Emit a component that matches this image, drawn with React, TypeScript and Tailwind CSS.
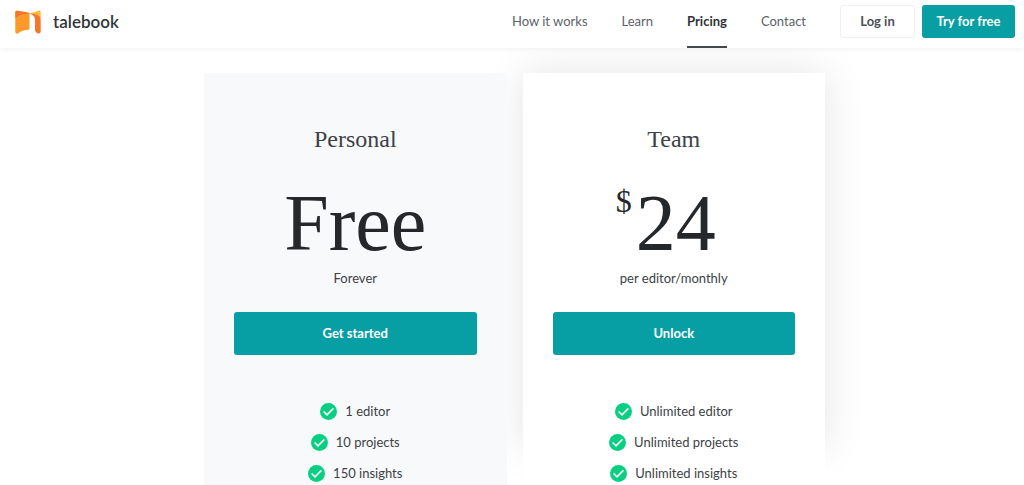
const links = [
  { label: "How it works", active: false },
  { label: "Learn", active: false },
  { label: "Pricing", active: true },
  { label: "Contact", active: false }
];

const plans = [
  {
    name: "Personal",
    currency: "",
    price: "Free",
    period: "Forever",
    action: "Get started",
    features: ["1 editor", "10 projects", "150 insights"],
    featured: false
  },
  {
    name: "Team",
    currency: "$",
    price: "24",
    period: "per editor/monthly",
    action: "Unlock",
    features: ["Unlimited editor", "Unlimited projects", "Unlimited insights"],
    featured: true
  }
];

function Logo() {
  return (
    <svg className="h-6 w-[26px]" viewBox="0 0 26 24" aria-hidden="true">
      <path d="M2.500.8C6 2 10 1.700 14.500 3.400V19.500C9 19.800 6 21.200 3.300 23.300C1.500 24.200.3 23.300.3 21.500V2.500C.3 1 1.200.3 2.500.8Z" fill="#fb9a2b" />
      <path d="M.3 8V2.500C.3 1 1.200.3 2.500.8C6.500 1.900 10 1.200 15 3.300C9 3.500 4 5 .3 8Z" fill="#f7742b" />
      <path d="M13.500 3.300C18 2.900 21 2 23.500.6C25 0 25.700.8 25.700 2V9C23 5 19 3.800 13.500 3.300Z" fill="#fdba3b" />
      <path d="M13.500 3.300C20 3.600 25.700 5 25.700 10V21.500C25.700 23.200 24 24 22.500 23.200C21 22.400 20 21.300 20 20V10C20 6.500 18 4.500 13.500 3.300Z" fill="#f7742b" />
    </svg>
  );
}

function CheckIcon() {
  return (
    <svg className="size-[17px] shrink-0" viewBox="0 0 16 16" aria-hidden="true">
      <circle cx="8" cy="8" r="8" fill="#0acf83" />
      <path d="M3.400 8 6.600 11.100 12.600 5.100" fill="none" stroke="#fff" strokeWidth="1.500" />
    </svg>
  );
}

export default function App() {
  return (
    <div className="bg-white font-['Lato',sans-serif] text-[13px] text-[#3d4246]">
      <header className="relative z-20 flex h-12 items-start justify-between bg-white pr-[9px] pl-[15px] shadow-[0_1px_6px_rgba(0,0,0,0.06)]">
        <a href="#" className="flex h-[43px] items-center gap-3 text-[17px] font-semibold text-[#303439]">
          <Logo />
          talebook
        </a>
        <div className="flex items-start">
          <nav className="mr-[34px] flex gap-[34px]">
            {links.map((link) => (
              <a
                key={link.label}
                href="#"
                className={
                  link.active
                    ? "h-12 border-b-2 border-[#44484d] leading-[43px] font-bold text-[#303439]"
                    : "h-12 leading-[43px] text-[#5b6167]"
                }
              >
                {link.label}
              </a>
            ))}
          </nav>
          <div className="flex gap-[7px] pt-[5px]">
            <button className="h-[33px] w-[75px] rounded-[3px] border border-[#f0f1f2] font-bold text-[#4b5157]">
              Log in
            </button>
            <button className="h-[33px] w-[93px] rounded-[3px] bg-[#079ea4] font-bold text-white">
              Try for free
            </button>
          </div>
        </div>
      </header>
      <main className="overflow-hidden pt-[25px] pl-[5px]">
        <div className="mx-auto grid max-w-[621px] grid-cols-2 gap-4">
          {plans.map((plan) => (
            <section
              key={plan.name}
              className={plan.featured ? "relative text-center" : "relative z-10 bg-[#f8f9fb] text-center"}
            >
              {/* the glow stops before the card does */}
              {plan.featured && (
                <div className="absolute inset-x-0 top-0 h-[375px] shadow-[0_0_40px_rgba(0,0,0,0.11)]" />
              )}
              <div className={plan.featured ? "relative bg-white px-[30px] pt-[50px]" : "px-[30px] pt-[50px]"}>
                <h2 className="font-['Liberation_Serif',serif] text-2xl leading-8">{plan.name}</h2>
                <p className="mt-6 flex h-[89px] justify-center font-['Liberation_Serif',serif] text-[80px] leading-[88px] text-[#24282b]">
                  {plan.currency && <span className="mr-1 text-[32px] leading-[44px]">{plan.currency}</span>}
                  <span className={plan.currency ? "pr-4" : ""}>{plan.price}</span>
                </p>
                <p className="leading-5">{plan.period}</p>
                <button className="mt-6 h-[43px] w-full rounded-[3px] bg-[#079ea4] font-bold text-white">
                  {plan.action}
                </button>
                <ul className="mt-[46px] flex flex-col gap-2.5 pb-1">
                  {plan.features.map((feature) => (
                    <li key={feature} className="flex items-center justify-center gap-2 leading-[21px]">
                      <CheckIcon />
                      {feature}
                    </li>
                  ))}
                </ul>
              </div>
            </section>
          ))}
        </div>
      </main>
    </div>
  );
}
